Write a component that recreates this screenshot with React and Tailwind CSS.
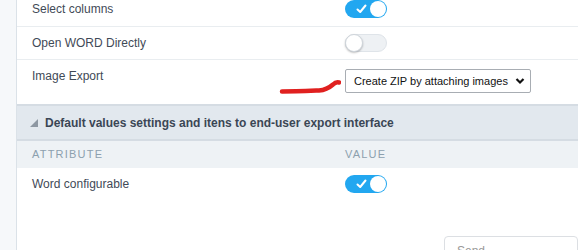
import React from 'react';

function Toggle({ on }) {
  if (on) {
    return (
      <div className="relative w-[42px] h-[18px] rounded-full bg-[#22a7f0]">
        <svg className="absolute left-[11px] top-[4px]" width="11" height="10" viewBox="0 0 11 10">
          <path d="M1.5 5.5 L4.2 8 L9.5 1.5" fill="none" stroke="#fff" strokeWidth="2" strokeLinecap="round" strokeLinejoin="round" />
        </svg>
        <div className="absolute right-[1px] top-[1px] w-[16px] h-[16px] rounded-full bg-white" />
      </div>
    );
  }
  return (
    <div className="relative w-[42px] h-[18px] rounded-full bg-[#eef1f4] border border-[#dfe4e9]">
      <div className="absolute left-[-1px] top-[-1px] w-[18px] h-[18px] rounded-full bg-white border border-[#cfd5db] shadow-[0_1px_2px_rgba(0,0,0,0.25)]" />
    </div>
  );
}

export default function App() {
  return (
    <div className="flex w-[578px] h-[250px] overflow-hidden bg-white font-['Liberation_Sans',Arial,sans-serif] text-[12px] text-[#3f4a57]">
      {/* left strip */}
      <div className="w-[17px] shrink-0 bg-[#f6f8fa] border-r border-[#dbe2e8]" />

      <div className="flex-1 flex flex-col">
        {/* settings rows */}
        <div className="shrink-0 grid grid-cols-[313px_1fr] items-center pl-[15px] h-[27px] pb-[9px] border-b border-[#e9edf0]">
          <span>Select columns</span>
          <Toggle on />
        </div>
        <div className="shrink-0 grid grid-cols-[313px_1fr] items-center pl-[15px] h-[33px] border-b border-[#e9edf0]">
          <span>Open WORD Directly</span>
          <Toggle />
        </div>
        <div className="shrink-0 grid grid-cols-[313px_1fr] items-start pl-[15px] h-[44px] pt-[9px]">
          <span className="leading-[14px]">Image Export</span>
          <div className="relative">
            <svg className="absolute left-[-66px] top-[10px]" width="62" height="16" viewBox="0 0 62 16">
              <path d="M3 12.5 C15 12.5 27 12 40 11.5 C47 11 50 9 54 5.5 C56 3.5 58 3 60 3.5" fill="none" stroke="#e0201f" strokeWidth="4.5" strokeLinecap="round" strokeLinejoin="round" />
            </svg>
            <div className="flex items-center w-[186px] h-[24px] border border-[#a8adb3] rounded-[2px] bg-white pl-[8px] pr-[5px] text-[#111] whitespace-nowrap">
              <span className="text-[11px]">Create ZIP by attaching images</span>
              <svg className="ml-auto" width="10" height="8" viewBox="0 0 10 8">
                <path d="M1.5 2 L5 5.5 L8.5 2" fill="none" stroke="#111" strokeWidth="2.2" />
              </svg>
            </div>
          </div>
        </div>

        {/* section header */}
        <div className="shrink-0 flex items-center gap-[7px] h-[37px] pl-[13px] bg-[#e2e8ee] border-t-[2px] border-b-[2px] border-[#d5dce3]">
          <svg width="8" height="8" viewBox="0 0 8 8">
            <path d="M0 8 L8 8 L8 0 Z" fill="#8d97a2" />
          </svg>
          <span className="font-bold text-[12px] text-[#3b4655] whitespace-nowrap">Default values settings and itens to end-user export interface</span>
        </div>

        {/* table head */}
        <div className="shrink-0 grid grid-cols-[313px_1fr] items-center pl-[15px] h-[27px] bg-[#eef2f5] text-[11px] tracking-[0.11em] text-[#8ca0ae]">
          <span>ATTRIBUTE</span>
          <span>VALUE</span>
        </div>

        <div className="shrink-0 grid grid-cols-[313px_1fr] items-center pl-[15px] h-[31px]">
          <span>Word configurable</span>
          <Toggle on />
        </div>

        <div className="shrink-0 flex justify-end mt-[37px]">
          <button className="w-[134px] h-[30px] border border-[#dcdfe3] rounded-[4px] bg-white text-left pl-[12px] pt-[7px] text-[#999] text-[12px] items-start flex leading-[14px]">
            Send
          </button>
        </div>
      </div>
    </div>
  );
}
